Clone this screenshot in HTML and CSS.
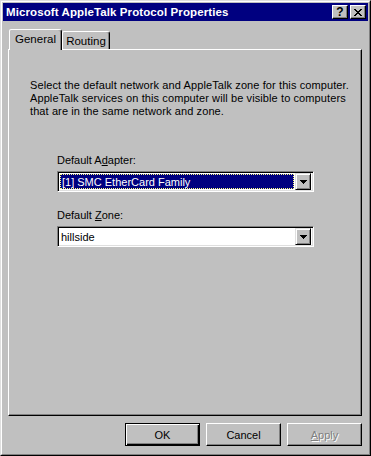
FILE: index.html
```html
<!DOCTYPE html>
<html>
<head>
<meta charset="utf-8">
<link rel="stylesheet" href="styles.css">
</head>
<body>
<div class="window">
  <div class="frame">
    <div class="titlebar">
      <span class="title">Microsoft AppleTalk Protocol Properties</span>
      <div class="tbtns">
        <span class="tbtn help">?</span>
        <span class="tbtn close"><svg width="8" height="7" viewBox="0 0 8 7" shape-rendering="crispEdges"><path d="M0 0h2v1h-2zM6 0h2v1h-2zM1 1h2v1h-2zM5 1h2v1h-2zM2 2h4v1h-4zM3 3h2v1h-2zM2 4h4v1h-4zM1 5h2v1h-2zM5 5h2v1h-2zM0 6h2v1h-2zM6 6h2v1h-2z" fill="#000"/></svg></span>
      </div>
    </div>
    <div class="content">
      <div class="tabs">
        <div class="tab active">General</div>
        <div class="tab">Routing</div>
      </div>
      <div class="panel">
        <p class="desc">Select the default network and AppleTalk zone for this computer.<br>AppleTalk services on this computer will be visible to computers<br>that are in the same network and zone.</p>
        <div class="field first">
          <div class="label">Default A<u>d</u>apter:</div>
          <div class="combo">
            <div class="combo-value"><span class="sel">[1] SMC EtherCard Family</span></div>
            <div class="combo-btn"><svg width="7" height="4" viewBox="0 0 7 4" shape-rendering="crispEdges"><path d="M0 0h7v1h-7zM1 1h5v1h-5zM2 2h3v1h-3zM3 3h1v1h-1z" fill="#000"/></svg></div>
          </div>
        </div>
        <div class="field">
          <div class="label">Default <u>Z</u>one:</div>
          <div class="combo">
            <div class="combo-value"><span class="plain">hillside</span></div>
            <div class="combo-btn"><svg width="7" height="4" viewBox="0 0 7 4" shape-rendering="crispEdges"><path d="M0 0h7v1h-7zM1 1h5v1h-5zM2 2h3v1h-3zM3 3h1v1h-1z" fill="#000"/></svg></div>
          </div>
        </div>
      </div>
      <div class="buttons">
        <div class="btn default">OK</div>
        <div class="btn">Cancel</div>
        <div class="btn disabled"><u>A</u>pply</div>
      </div>
    </div>
  </div>
</div>
</body>
</html>
```

FILE: styles.css
```css
html, body {
  margin: 0;
  padding: 0;
  background: #c0c0c0;
}
body {
  font-family: "Liberation Sans", Arial, sans-serif;
  font-size: 11px;
  color: #000;
}
.window {
  width: 371px;
  height: 456px;
  box-sizing: border-box;
  border: 1px solid;
  border-color: #dfdfdf #000 #000 #dfdfdf;
  background: #c0c0c0;
}
.frame {
  height: 100%;
  box-sizing: border-box;
  border: 1px solid;
  border-color: #fff #808080 #808080 #fff;
  padding: 1px;
  display: flex;
  flex-direction: column;
}
.titlebar {
  height: 18px;
  background: #000080;
  color: #fff;
  display: flex;
  align-items: center;
  justify-content: space-between;
  padding: 0 2px 0 3px;
}
.title {
  font-weight: bold;
  font-size: 11.5px;
  letter-spacing: 0.1px;
}
.tbtns {
  display: flex;
  gap: 2px;
}
.tbtn {
  width: 16px;
  height: 14px;
  box-sizing: border-box;
  background: #c0c0c0;
  border: 1px solid;
  border-color: #fff #000 #000 #fff;
  box-shadow: inset -1px -1px #808080;
  display: flex;
  align-items: center;
  justify-content: center;
  color: #000;
  font-weight: bold;
  font-size: 12px;
  line-height: 12px;
}
.content {
  flex: 1;
  padding: 8px 6px 0 5px;
  display: flex;
  flex-direction: column;
}
.tabs {
  height: 20px;
  display: flex;
  align-items: flex-end;
  padding-left: 1px;
}
.tab {
  height: 18px;
  box-sizing: border-box;
  border: 1px solid;
  border-bottom: none;
  border-color: #fff #000 transparent #fff;
  box-shadow: inset -1px 0 #808080;
  border-radius: 2px 3px 0 0;
  display: flex;
  align-items: center;
  justify-content: center;
  padding-top: 1px;
  width: 48px;
  font-size: 11.5px;
}
.tab.active {
  width: 53px;
  height: 21px;
  margin-bottom: -1px;
  background: #c0c0c0;
  position: relative;
  z-index: 1;
  padding-top: 0;
  padding-bottom: 2px;
}
.panel {
  height: 367px;
  box-sizing: border-box;
  border: 1px solid;
  border-color: #fff #000 #000 #fff;
  box-shadow: inset -1px -1px #808080;
  padding: 29px 10px 0 21px;
}
.desc {
  margin: 0;
  line-height: 13px;
  letter-spacing: 0.1px;
}
.field {
  margin: 0 0 0 27px;
  width: 257px;
}
.field.first {
  margin-top: 36px;
  margin-bottom: 17px;
}
.label {
  line-height: 13px;
  margin-bottom: 4px;
}
.combo {
  height: 21px;
  box-sizing: border-box;
  border: 1px solid;
  border-color: #808080 #fff #fff #808080;
  box-shadow: inset 1px 1px #000, inset -1px -1px #dfdfdf;
  background: #fff;
  padding: 2px 2px 2px 2px;
  display: flex;
}
.combo-value {
  flex: 1;
  display: flex;
  margin-right: 1px;
}
.sel {
  flex: 1;
  background: #000080;
  color: #fff;
  box-sizing: border-box;
  border: 1px dotted #ffff80;
  padding-left: 1px;
  line-height: 15px;
}
.plain {
  padding-left: 1px;
  line-height: 17px;
}
.combo-btn {
  width: 16px;
  height: 17px;
  margin-top: -1px;
  box-sizing: border-box;
  background: #c0c0c0;
  border: 1px solid;
  border-color: #dfdfdf #000 #000 #dfdfdf;
  box-shadow: inset 1px 1px #fff, inset -1px -1px #808080;
  display: flex;
  align-items: center;
  justify-content: center;
}
.buttons {
  display: flex;
  justify-content: flex-end;
  gap: 6px;
  margin-top: 7px;
  padding-right: 0;
}
.btn {
  width: 75px;
  height: 23px;
  box-sizing: border-box;
  border: 1px solid;
  border-color: #fff #000 #000 #fff;
  box-shadow: inset -1px -1px #808080;
  display: flex;
  align-items: center;
  justify-content: center;
}
.btn.default {
  border-color: #000;
  box-shadow: inset 1px 1px #fff, inset -1px -1px #000, inset -2px -2px #808080;
}
.btn.disabled {
  color: #808080;
  text-shadow: 1px 1px #fff;
}
```
